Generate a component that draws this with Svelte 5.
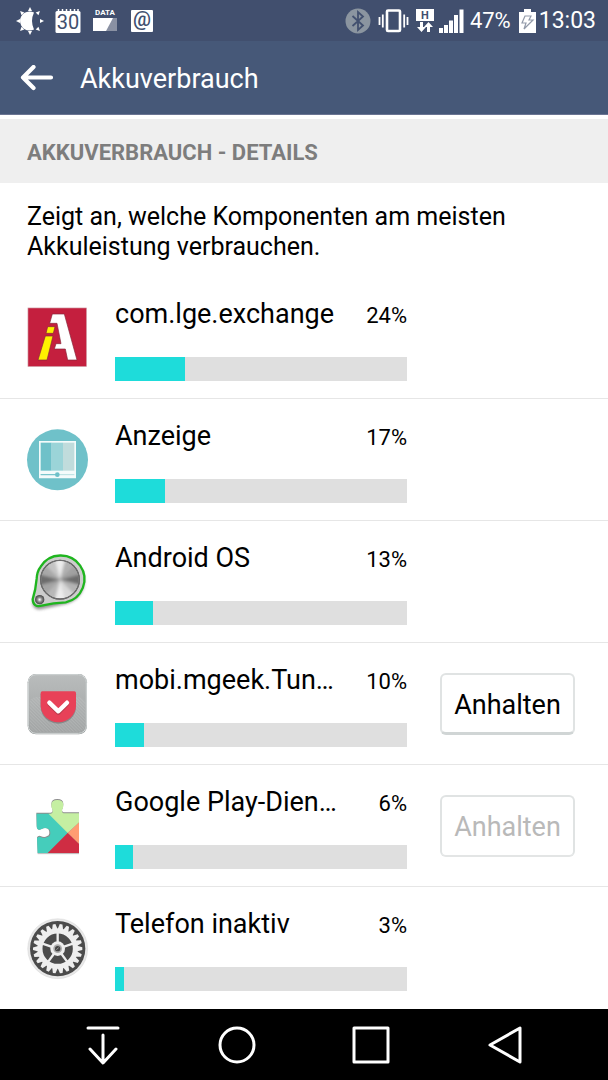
<script>
  const apps = [
    { name: 'com.lge.exchange', percent: 24, icon: 'exchange' },
    { name: 'Anzeige', percent: 17, icon: 'display' },
    { name: 'Android OS', percent: 13, icon: 'system' },
    { name: 'mobi.mgeek.Tun…', percent: 10, icon: 'pocket', stop: true, enabled: true },
    { name: 'Google Play-Dien…', percent: 6, icon: 'play', stop: true, enabled: false },
    { name: 'Telefon inaktiv', percent: 3, icon: 'idle' },
  ];

  const viewBoxes = {
    exchange: '36 38 180 180',
    display: '36 38 180 180',
    system: '36 35 180 180',
    pocket: '36 41 180 180',
    play: '36 31 180 180',
    idle: '36 38 180 180',
  };

  const teeth = Array.from({ length: 22 }, (_, i) => (i * 360) / 22);
  const spokes = [0, 72, 144, 216, 288];
  const rays = [0, 45, 90, 135, 180, 225, 270, 315];
  const shine = ['#ececec', '#b0b0b0', '#a0a0a0', '#6c6c6c', '#b4b4b4', '#d8d8d8', '#ececec', '#b8b8b8', '#a4a4a4', '#6c6c6c', '#a8a8a8', '#c4c4c4'];

  function wedge(i, n, cx, cy, r) {
    const a = (i * 2 * Math.PI) / n - Math.PI / 2 - Math.PI / n;
    const b = a + (2 * Math.PI) / n;
    return `M${cx} ${cy}L${cx + r * Math.cos(a)} ${cy + r * Math.sin(a)}A${r} ${r} 0 0 1 ${cx + r * Math.cos(b)} ${cy + r * Math.sin(b)}Z`;
  }
</script>

<div class="screen">
  <div class="status">
    <div class="group left">
      <svg width="28" height="28" viewBox="0 0 28 28" fill="#fff" aria-hidden="true">
        <path d="M18 5.600A9.500 9.500 0 1 0 18 22.400Q14 14 18 5.600Z" />
        {#each rays as r}
          <path d="M14 0l2 4h-4z" transform="rotate({r} 14 14)" />
        {/each}
      </svg>
      <svg width="26" height="26" viewBox="0 0 26 26" aria-hidden="true">
        <path d="M2 3h22q1.500 0 1.500 1.500v19q0 1.500-1.500 1.500H2Q.5 25 .5 23.500v-19Q.5 3 2 3Z" fill="#fff" />
        <path d="M3.500 1v3M7.500 1v3M11.500 1v3M15.500 1v3M19.500 1v3M23 1v3" stroke="#fff" stroke-width="1.500" />
        <text x="13" y="21" text-anchor="middle" class="glyph cal">30</text>
      </svg>
      <svg width="26" height="26" viewBox="0 0 26 26" aria-hidden="true">
        <text x="13" y="7" text-anchor="middle" class="glyph data">DATA</text>
        <path d="M1 10h24v13H1z" fill="#8a91a3" />
        <path d="M1 10h20l-7 13H1z" fill="#fff" />
      </svg>
      <svg class="mail" width="22" height="26" viewBox="0 0 22 26" aria-hidden="true">
        <rect y="2" width="22" height="22" rx="1" fill="#fff" />
        <text x="11" y="18" text-anchor="middle" class="glyph at">@</text>
      </svg>
    </div>
    <div class="group right">
      <svg width="26" height="26" viewBox="0 0 26 26" aria-hidden="true">
        <circle cx="13" cy="13" r="12.500" fill="#8b95a0" />
        <path d="M7.500 8L18 17.500l-5 4.500V4l5 4.500L7.500 18" fill="none" stroke="#42506f" stroke-width="1.800" />
      </svg>
      <svg class="vibrate" width="32" height="26" viewBox="0 0 32 26" fill="none" stroke="#fff" aria-hidden="true">
        <rect x="9" y="2.500" width="13" height="20.500" rx="1" stroke-width="2.600" />
        <path d="M1.500 9v8M4.800 6.500v13M26.200 6.500v13M29.500 9v8" stroke-width="1.800" />
      </svg>
      <svg class="net" width="20" height="26" viewBox="0 0 20 26" fill="#fff" aria-hidden="true">
        <path d="M1 1h18v12H1z" />
        <text x="10" y="11" text-anchor="middle" class="glyph h">H</text>
        <path d="M5 14h3v5h3l-4.500 5L2 19h3zM12 24h3v-5h3l-4.500-5L9 19h3z" />
      </svg>
      <svg class="signal" width="25" height="26" viewBox="0 0 25 26" fill="#fff" aria-hidden="true">
        <path d="M0 20h4v5H0zM5 17h4v8H5zM10 12.500h4V25h-4zM15 7h4v18h-4zM20.500 1.500h4V25h-4z" />
      </svg>
      <span class="charge">47%</span>
      <svg width="17" height="26" viewBox="0 0 17 26" aria-hidden="true">
        <path d="M5 1h7v3h5v21H0V4h5z" fill="#fff" />
        <path d="M6 8h6l-2 4h4l-9 9 2-6H3z" fill="#fff" stroke="#929aa9" stroke-width="1.200" />
      </svg>
      <span class="clock">13:03</span>
    </div>
  </div>

  <header>
    <button class="back" aria-label="Zurück">
      <svg width="34" height="28" viewBox="0 0 34 28" fill="none" stroke="#fff" stroke-width="4.200" stroke-linecap="round" stroke-linejoin="round" aria-hidden="true">
        <path d="M31 12.500H3M13.500 2L3 12.500l10.500 10.500" />
      </svg>
    </button>
    <h1>Akkuverbrauch</h1>
  </header>

  <main>
    <h2>AKKUVERBRAUCH - DETAILS</h2>
    <p>Zeigt an, welche Komponenten am meisten Akkuleistung verbrauchen.</p>
    <ul>
      {#each apps as app}
        <li>
          <svg class="app-icon" viewBox={viewBoxes[app.icon]} aria-hidden="true">
            {#if app.icon === 'exchange'}
              <rect x="39" y="38" width="175" height="175" fill="#c41f3e" stroke="#c98a96" stroke-width="2" />
              <path d="M112 56H148L186 194H158L151 161H118L123 145H138L126 84H104Z" fill="#fff" stroke="#86263a" stroke-width="2" />
              <path d="M98 94h22l-5 20H93zM91 122h23L96 194H69z" fill="#fff100" stroke="#86263a" stroke-width="2" />
            {:else if app.icon === 'display'}
              <circle cx="127.500" cy="127.500" r="91.500" fill="#6fc1c9" />
              <path d="M72 71h111v112H72z" fill="#f4fbfb" />
              <path d="M77 76h33v84H77z" fill="#6fc1c9" />
              <path d="M110 76h34v84h-34z" fill="#9bd4d8" />
              <path d="M144 76h34v84h-34z" fill="#c0dcdc" />
              <path d="M77 172h101" stroke="#b7dfe1" stroke-width="3" />
              <path d="M77 172h50" stroke="#6fc1c9" stroke-width="3" />
              <circle cx="127" cy="172" r="7" fill="#6fc1c9" />
            {:else if app.icon === 'system'}
              <defs>
                <filter id="soft" x="-20%" y="-20%" width="140%" height="150%"><feGaussianBlur stdDeviation="5" /></filter>
                <filter id="brush"><feGaussianBlur stdDeviation="5" /></filter>
                <clipPath id="dial"><circle cx="135" cy="118" r="56" /></clipPath>
                <radialGradient id="knob"><stop offset="0" stop-color="#fff" /><stop offset=".5" stop-color="#888" /><stop offset="1" stop-color="#444" /></radialGradient>
              </defs>
              <path d="M75 92A70 70 0 1 1 155 190L82 206Q56 212 52 189Z" fill="#777" filter="url(#soft)" opacity=".8" />
              <path d="M77 79A71 71 0 1 1 152 186Q115 187 80 196Q55 202 53 177Q62 150 65 115Q66 93 77 79Z" fill="#cdcdcd" stroke="#1fb51f" stroke-width="7" />
              <circle cx="135" cy="118" r="60" fill="#555" />
              <g clip-path="url(#dial)">
                <circle cx="135" cy="118" r="58" fill="#aaa" />
                <g filter="url(#brush)">
                  {#each shine as color, i}
                    <path d={wedge(i, shine.length, 135, 118, 70)} fill={color} />
                  {/each}
                </g>
              </g>
              <circle cx="135" cy="118" r="58" fill="none" stroke="#707070" stroke-width="3" />
              <circle cx="74" cy="178" r="14" fill="url(#knob)" />
            {:else if app.icon === 'pocket'}
              <defs>
                <linearGradient id="tile" x2="0" y2="1"><stop stop-color="#b9bcbc" /><stop offset="1" stop-color="#a0a3a3" /></linearGradient>
                <pattern id="stripe" width="7" height="7" patternUnits="userSpaceOnUse" patternTransform="rotate(-45)"><path d="M0 0h3v7H0z" fill="#fff" opacity=".13" /></pattern>
              </defs>
              <rect x="38" y="41" width="178" height="181" rx="25" fill="#8f9393" />
              <rect x="40" y="43" width="174" height="176" rx="23" fill="url(#tile)" stroke="#d3d8d8" stroke-width="3" />
              <rect x="44" y="110" width="167" height="104" rx="20" fill="url(#stripe)" />
              <path d="M77 98q0-5 5-5h96q5 0 5 5v37a53 51 0 0 1-106 0z" fill="#777" transform="translate(0 4)" opacity=".7" />
              <path d="M77 98q0-5 5-5h96q5 0 5 5v37a53 51 0 0 1-106 0z" fill="#e84158" />
              <path d="M103 127l27 26 26-26" fill="none" stroke="#9c3746" stroke-width="13" stroke-linecap="round" stroke-linejoin="round" transform="translate(0 4)" opacity=".6" />
              <path d="M103 127l27 26 26-26" fill="none" stroke="#fff" stroke-width="13" stroke-linecap="round" stroke-linejoin="round" />
            {:else if app.icon === 'play'}
              <defs>
                <clipPath id="puzzle">
                  <path d="M64 84H106Q113 84 113 76V72Q109 68 109 58Q109 43 127 43Q145 43 145 58Q145 68 141 72V76Q141 83 149 83H192V203H68L66 158Q69 152 76 154Q88 159 95 155Q106 153 106 143Q106 130 95 128Q88 126 80 130Q66 137 65 122Z" />
                </clipPath>
              </defs>
              <path d="M64 81H106Q113 81 113 73Q109 66 109 55Q109 40 127 40Q145 40 145 55Q145 66 141 73Q141 80 149 80H192V203H68L66 155Q69 149 76 151Q88 156 95 152Q103 150 103 143Q103 130 95 128Q88 126 80 130Q66 137 65 122Z" fill="#8d8d8d" />
              <g clip-path="url(#puzzle)">
                <path d="M60 80h44l54 62-62 66H60z" fill="#45cdbb" />
                <path d="M103 30h95v75l-40 37-57-57z" fill="#c5efa2" />
                <path d="M158 142l40-37v76z" fill="#ff9c72" />
                <path d="M158 142l40 39v25H94z" fill="#cf2d43" />
              </g>
              <path d="M68 204h124" stroke="#aaa" stroke-width="2" />
            {:else}
              <circle cx="128" cy="130" r="90" fill="#e8e8e8" stroke="#ccc" stroke-width="1" />
              <circle cx="128" cy="130" r="83" fill="#4b4b4b" />
              {#each teeth as t}
                <path d="M119 74L124 56h8l5 18z" fill="#eee" transform="rotate({t + 8} 128 130)" />
              {/each}
              <circle cx="128" cy="130" r="53" fill="none" stroke="#eee" stroke-width="15" />
              {#each spokes as s}
                <path d="M128 82v30" stroke="#eee" stroke-width="7" transform="rotate({s} 128 130)" />
              {/each}
              <circle cx="128" cy="130" r="22" fill="#eee" />
              <circle cx="128" cy="130" r="13" fill="#aaa" />
              <circle cx="128" cy="130" r="8" fill="#444" />
              <path d="M124 133l7-6" stroke="#bbb" stroke-width="2" />
            {/if}
          </svg>
          <div class="usage">
            <div class="line">
              <span class="name">{app.name}</span>
              <span class="percent">{app.percent}%</span>
            </div>
            <div class="track" role="progressbar" aria-label={app.name} aria-valuenow={app.percent} aria-valuemin="0" aria-valuemax="100">
              <div class="fill" style="width: {app.percent}%"></div>
            </div>
          </div>
          {#if app.stop}
            <button class="stop" disabled={!app.enabled}>Anhalten</button>
          {/if}
        </li>
      {/each}
    </ul>
  </main>

  <nav>
    <button aria-label="Benachrichtigungen">
      <svg width="40" height="40" viewBox="0 0 40 40" aria-hidden="true"><path d="M5 3h30M20 10v27M7 24l13 14 13-14" /></svg>
    </button>
    <button aria-label="Startseite">
      <svg width="40" height="40" viewBox="0 0 40 40" aria-hidden="true"><circle cx="20" cy="20" r="17" /></svg>
    </button>
    <button aria-label="Letzte Apps">
      <svg width="40" height="40" viewBox="0 0 40 40" aria-hidden="true"><path d="M3 3h34v34H3z" /></svg>
    </button>
    <button aria-label="Zurück">
      <svg width="40" height="40" viewBox="0 0 40 40" aria-hidden="true"><path d="M35 3v34L5 20z" /></svg>
    </button>
  </nav>
</div>

<style>
  :global(body) {
    margin: 0;
  }
  .screen {
    display: flex;
    flex-direction: column;
    min-height: 100vh;
    background: #fff;
    color: #000;
    font-family: Roboto, sans-serif;
  }
  svg {
    display: block;
    flex: none;
  }
  button {
    font: inherit;
    color: inherit;
    background: none;
    border: 0;
    padding: 0;
  }
  .status {
    display: flex;
    justify-content: space-between;
    align-items: center;
    height: 41px;
    padding: 0 12px 0 16px;
    background: #414f6e;
    color: #fff;
  }
  .group {
    display: flex;
    align-items: center;
  }
  .left {
    gap: 11px;
  }
  .mail {
    margin-left: 2px;
  }
  .vibrate {
    margin-left: 7px;
  }
  .net {
    margin-left: 5px;
  }
  .signal {
    margin-left: 4px;
  }
  .charge {
    margin: 0 8px 0 6px;
    font-size: 22px;
  }
  .clock {
    margin-left: 3px;
    font-size: 23px;
  }
  .glyph {
    font-family: Roboto, sans-serif;
    font-weight: 700;
  }
  .cal {
    font-size: 20px;
    font-weight: 400;
    fill: #414f6e;
  }
  .data {
    font-size: 8px;
    fill: #fff;
  }
  .at {
    font-size: 20px;
    font-weight: 500;
    fill: #414f6e;
  }
  .h {
    font-size: 11px;
    fill: #414f6e;
  }
  header {
    display: flex;
    align-items: center;
    gap: 26px;
    box-sizing: border-box;
    height: 74px;
    padding: 2px 20px 0;
    background: #465878;
    border-bottom: 1px solid #6b7593;
    color: #fff;
  }
  h1 {
    margin: 0;
    font-size: 27px;
    font-weight: 400;
  }
  main {
    display: flex;
    flex: 1;
    flex-direction: column;
    padding-top: 4px;
  }
  h2 {
    margin: 0;
    padding: 3px 27px 0;
    background: #efefef;
    color: #7d7d7d;
    font-size: 22px;
    font-weight: 700;
    line-height: 61px;
  }
  p {
    margin: 0;
    padding: 19px 27px 15px;
    font-size: 25px;
    line-height: 30px;
  }
  ul {
    display: grid;
    flex: 1;
    grid-auto-rows: 1fr;
    margin: 0;
    padding: 0;
    list-style: none;
  }
  li {
    display: grid;
    grid-template-columns: 60px 1fr 135px;
    align-items: center;
    box-sizing: border-box;
    padding: 0 33px 0 27px;
    border-bottom: 1px solid #e6e6e6;
  }
  li:last-child {
    border-bottom-color: #fff;
  }
  .app-icon {
    width: 60px;
    height: 60px;
    overflow: visible;
  }
  .usage {
    min-width: 0;
    margin: 5px 33px 0 28px;
  }
  .line {
    display: flex;
    justify-content: space-between;
    align-items: baseline;
    margin-bottom: 26px;
    line-height: 30px;
    white-space: nowrap;
  }
  .name {
    font-size: 27px;
  }
  .percent {
    font-size: 22px;
  }
  .track {
    height: 24px;
    background: #dfdfdf;
  }
  .fill {
    height: 100%;
    background: #1edcda;
  }
  .stop {
    height: 62px;
    padding-top: 3px;
    border: 2px solid #e0e3e3;
    border-bottom: 3px solid #d0d5d5;
    border-radius: 6px;
    font-size: 27px;
    white-space: nowrap;
  }
  .stop:disabled {
    border-bottom: 2px solid #e3e5e5;
    color: #b9b9b9;
  }
  nav {
    display: flex;
    height: 71px;
    padding: 0 36px;
    background: #000;
  }
  nav button {
    display: flex;
    flex: 1;
    align-items: center;
    justify-content: center;
  }
  nav svg {
    fill: none;
    stroke: #fff;
    stroke-width: 3;
    stroke-linecap: round;
    stroke-linejoin: round;
  }
</style>
